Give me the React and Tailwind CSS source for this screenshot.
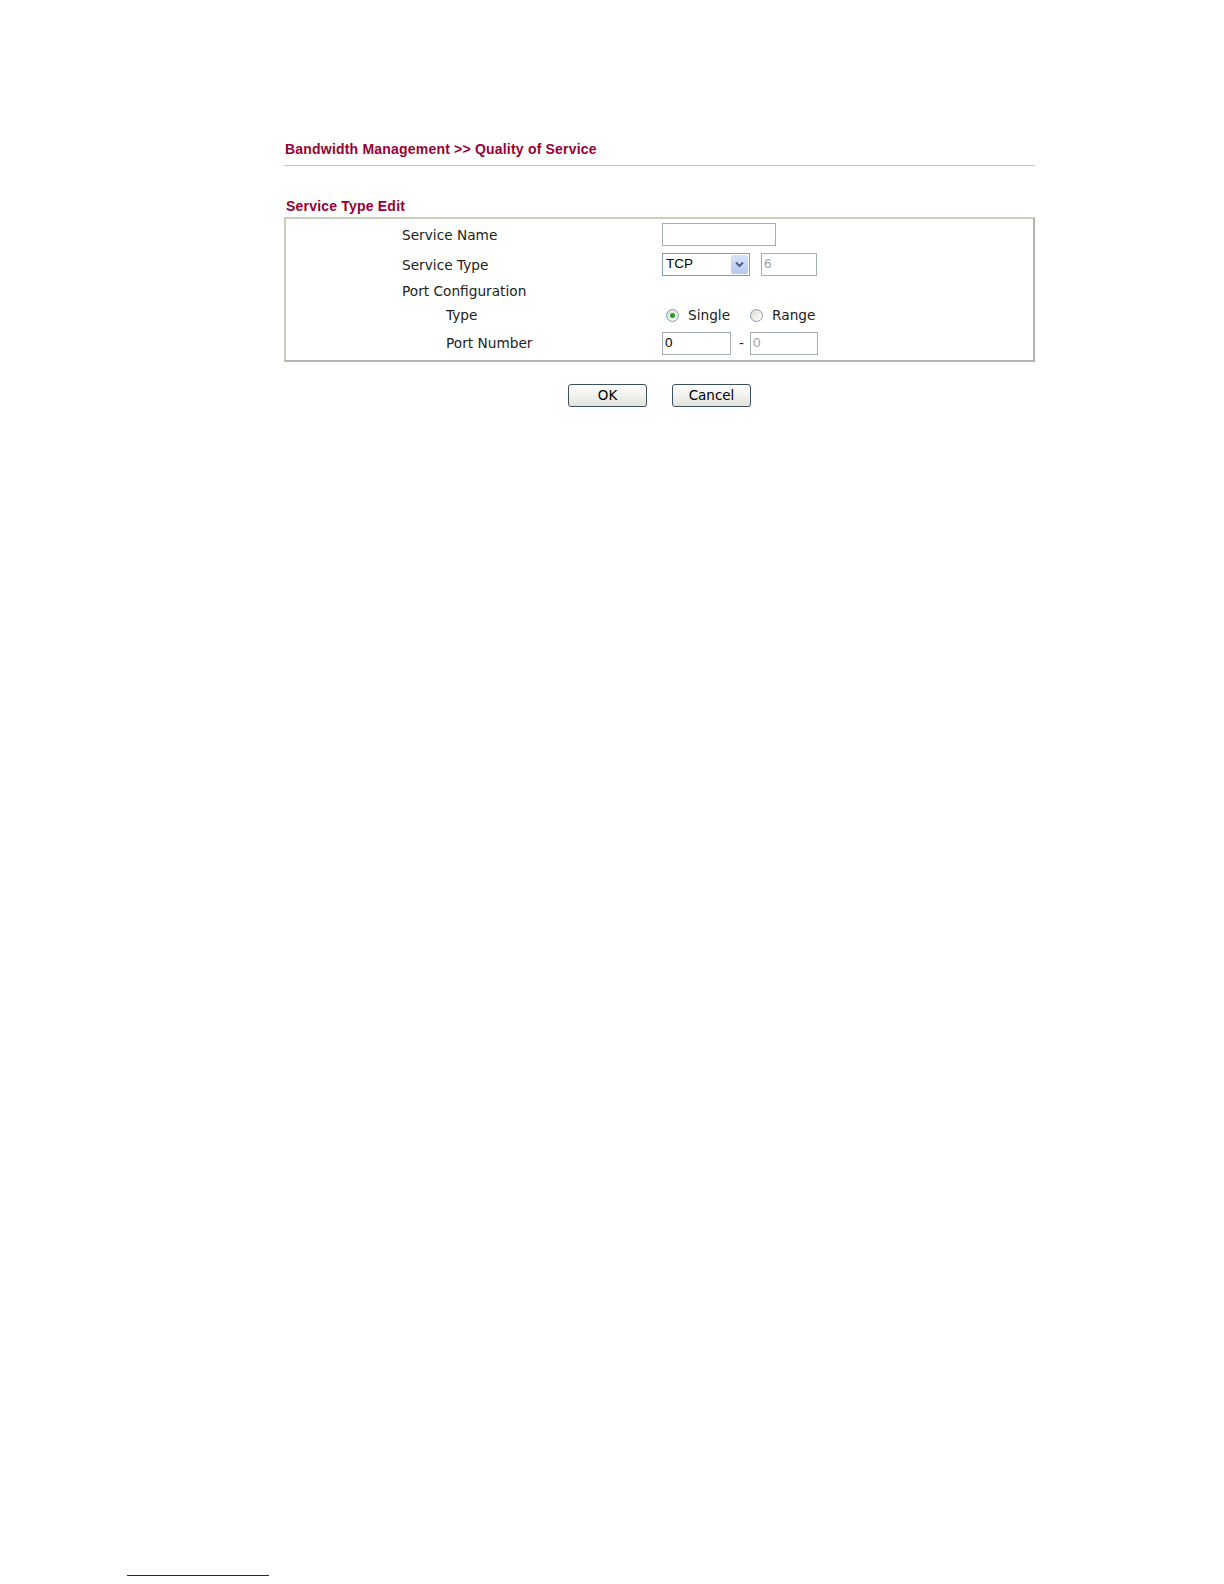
import React from "react";

const label = "text-[13.7px] text-[#222] leading-none";
const sans = { fontFamily: "'Liberation Sans', Arial, sans-serif" };

function Radio({ checked }) {
  return (
    <span className="flex h-[13px] w-[13px] items-center justify-center rounded-full border border-[#7f9db9] bg-gradient-to-br from-[#dcdcd6] to-white">
      {checked && <span className="h-[5px] w-[5px] rounded-full bg-[#21a121]" />}
    </span>
  );
}

function TextBox({ w, value = "", disabled = false }) {
  return (
    <div
      className={`flex h-[23px] items-center border border-[#a5acb2] bg-white px-[2px] text-[13.5px] ${
        disabled ? "text-[#a0a0a0]" : "text-black"
      } ${w}`}
      style={sans}
    >
      {value}
    </div>
  );
}

function Button({ children }) {
  return (
    <button
      type="button"
      className="h-[23px] w-[79px] rounded-[3px] border border-[#3c5064] bg-gradient-to-b from-white to-[#e3e3dd] text-[13.5px] leading-none text-black"
      style={{ fontFamily: "'DejaVu Sans', Verdana, sans-serif" }}
    >
      {children}
    </button>
  );
}

export default function App() {
  return (
    <div
      className="relative min-h-[1584px] w-[1224px] bg-white"
      style={{ fontFamily: "'DejaVu Sans', Verdana, sans-serif" }}
    >
      <div className="ml-[284px] w-[751px] pt-[140px]">
        <div
          className="h-[18px] pl-[1px] text-[14px] font-bold leading-[18px] tracking-[0.2px] text-[#990033]"
          style={sans}
        >
          Bandwidth Management &gt;&gt; Quality of Service
        </div>
        <div className="mt-[7px] h-px bg-[#c6c6bd]" />

        <div
          className="mt-[29px] h-[22px] pl-[2px] text-[14px] font-bold leading-[22px] tracking-[0.2px] text-[#990033]"
          style={sans}
        >
          Service Type Edit
        </div>

        <div className="border-2 border-t-[#c9cfbd] border-l-[#c9cfbd] border-r-[#b3b3ad] border-b-[#b3b3ad] bg-white">
          <div className="flex h-[31px] items-center">
            <div className={`w-[376px] pl-[116px] pt-[2px] ${label}`}>Service Name</div>
            <TextBox w="w-[114px]" />
          </div>
          <div className="flex h-[29px] items-center">
            <div className={`w-[376px] pl-[116px] pt-[2px] ${label}`}>Service Type</div>
            <div
              className="flex h-[23px] w-[88px] items-center border border-[#7f9db9] bg-white text-[13.5px]"
              style={sans}
            >
              <span className="flex-1 pl-[3px]">TCP</span>
              <span className="m-[1px] flex h-[19px] w-[17px] items-center justify-center rounded-[2px] bg-gradient-to-b from-[#d7e3fb] to-[#b5c8f3]">
                <svg width="9" height="7" viewBox="0 0 9 7">
                  <path d="M1 1.5 L4.5 5 L8 1.5" fill="none" stroke="#4d6185" strokeWidth="2" />
                </svg>
              </span>
            </div>
            <div className="ml-[11px]">
              <TextBox w="w-[56px]" value="6" disabled />
            </div>
          </div>
          <div className="flex h-[25px] items-center">
            <div className={`w-[376px] pl-[116px] ${label}`}>Port Configuration</div>
          </div>
          <div className="flex h-[23px] items-center">
            <div className={`w-[376px] pl-[160px] ${label}`}>Type</div>
            <div className="flex items-center pl-[4px]">
              <Radio checked />
              <span className={`ml-[9px] ${label}`}>Single</span>
              <span className="ml-[20px]">
                <Radio />
              </span>
              <span className={`ml-[9px] ${label}`}>Range</span>
            </div>
          </div>
          <div className="flex h-[33px] items-center">
            <div className={`w-[376px] pl-[160px] ${label}`}>Port Number</div>
            <TextBox w="w-[69px]" value="0" />
            <span className={`ml-[8px] mr-[6px] ${label}`}>-</span>
            <TextBox w="w-[68px]" value="0" disabled />
          </div>
        </div>

        <div className="mt-[22px] flex justify-center gap-[25px]">
          <Button>OK</Button>
          <Button>Cancel</Button>
        </div>
      </div>

      <div className="absolute left-[127px] top-[1575px] h-px w-[142px] bg-[#1a1aa0]" />
    </div>
  );
}
